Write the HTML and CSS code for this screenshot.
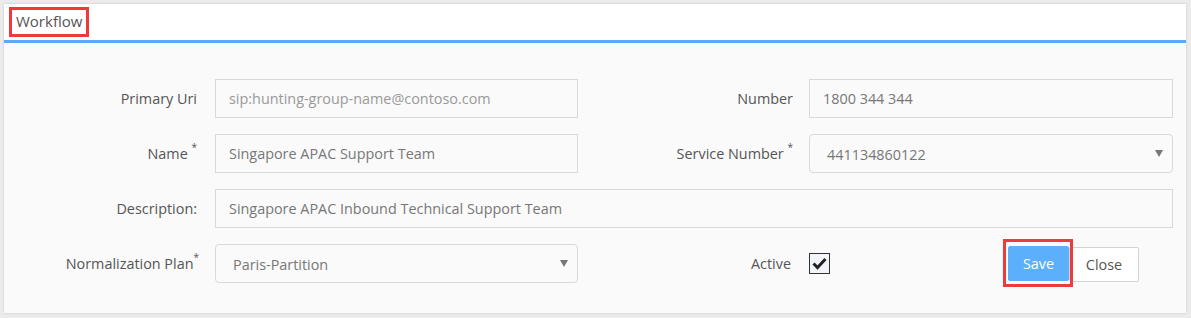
FILE: index.html
```html
<!DOCTYPE html>
<html>
<head>
<meta charset="utf-8">
<link rel="stylesheet" href="styles.css">
</head>
<body>
<div class="panel">
  <div class="panel-head"><span class="title">Workflow</span></div>
  <div class="panel-body">
    <form class="form-grid">
      <label class="lbl"><span>Primary Uri</span></label>
      <div class="ctl"><input class="field" placeholder="sip:hunting-group-name@contoso.com"></div>
      <label class="lbl"><span>Number</span></label>
      <div class="ctl"><input class="field" value="1800 344 344"></div>

      <label class="lbl"><span>Name <sup>*</sup></span></label>
      <div class="ctl"><input class="field" value="Singapore APAC Support Team"></div>
      <label class="lbl"><span>Service Number <sup>*</sup></span></label>
      <div class="ctl"><div class="select"><span>441134860122</span><svg class="caret" width="8" height="7" viewBox="0 0 8 7"><path d="M0 0 H8 L4 7 Z" fill="#777"/></svg></div></div>

      <label class="lbl"><span>Description:</span></label>
      <div class="ctl wide"><input class="field" value="Singapore APAC Inbound Technical Support Team"></div>

      <label class="lbl"><span>Normalization Plan<sup>*</sup></span></label>
      <div class="ctl"><div class="select"><span>Paris-Partition</span><svg class="caret" width="8" height="7" viewBox="0 0 8 7"><path d="M0 0 H8 L4 7 Z" fill="#777"/></svg></div></div>
      <label class="lbl"><span>Active</span></label>
      <div class="ctl actions">
        <span class="check">
          <svg width="15" height="13" viewBox="0 0 15 13"><path d="M1.5 6.5 L5.5 10.5 L13.5 2" fill="none" stroke="#222" stroke-width="3"/></svg>
        </span>
        <div class="buttons">
          <span class="mark"><button type="button" class="btn btn-primary">Save</button></span>
          <button type="button" class="btn btn-default">Close</button>
        </div>
      </div>
    </form>
  </div>
</div>
</body>
</html>
```

FILE: styles.css
```css
html, body {
  margin: 0;
  padding: 0;
  background: #ebebeb;
}
body {
  padding: 4px 5px 5px 4px;
  font-family: "Open Sans", "Liberation Sans", sans-serif;
  font-size: 14.4px;
  color: #555;
}
.panel {
  background: #fafafa;
  box-shadow: 0 0 2px rgba(0,0,0,0.18);
  height: 309px;
  box-sizing: border-box;
}
.panel-head {
  background: #fff;
  height: 36px;
  border-bottom: 3px solid #5aabf4;
  display: flex;
  align-items: center;
  padding-left: 5px;
}
.title {
  border: 3px solid #ee3a3a;
  padding: 2px 4px 3px 4px;
  font-size: 15px;
  color: #555;
  line-height: 19px;
}
.panel-body {
  padding: 36px 0 0 13px;
}
.form-grid {
  display: grid;
  grid-template-columns: 198px 363px 231px 364px;
  grid-auto-rows: 39px;
  row-gap: 16px;
  margin: 0;
}
.lbl {
  display: flex;
  align-items: center;
  justify-content: flex-end;
  padding-right: 18px;
  color: #555;
  white-space: nowrap;
}
.lbl:nth-child(4n+3) { padding-right: 16px; }
.lbl sup {
  font-size: 10px;
  line-height: 0;
  position: relative;
  top: -2px;
}
.ctl { display: flex; }
.wide { grid-column: 2 / 5; }
.field {
  width: 100%;
  height: 39px;
  box-sizing: border-box;
  border: 1px solid #d9d9d9;
  border-radius: 0;
  background: #fafafa;
  padding: 0 13px;
  font-family: inherit;
  font-size: 14.4px;
  color: #777;
  outline: none;
}
.field::placeholder { color: #999; }
.select {
  width: 100%;
  height: 39px;
  box-sizing: border-box;
  border: 1px solid #d9d9d9;
  border-radius: 4px;
  display: flex;
  align-items: center;
  justify-content: space-between;
  padding: 2px 9px 0 17px;
  color: #777;
  background: #fafafa;
}
.caret { margin-top: -3px; }
.actions {
  align-items: center;
  justify-content: space-between;
}
.check {
  width: 21px;
  height: 21px;
  box-sizing: border-box;
  border: 1px solid #333;
  background: #f2f5fa;
  display: flex;
  align-items: center;
  justify-content: center;
}
.buttons {
  display: flex;
  align-items: center;
  margin-right: 34px;
  margin-top: -2px;
}
.mark {
  border: 3px solid #ee3a3a;
  padding: 4px 1px 3px 2px;
  display: flex;
  margin-right: -4px;
  position: relative;
  z-index: 1;
}
.btn {
  font-family: inherit;
  font-size: 14.4px;
  height: 35px;
  box-sizing: border-box;
  border-radius: 2px;
  cursor: pointer;
}
.btn-primary {
  width: 61px;
  background: #5cb0fb;
  border: 1px solid #5cb0fb;
  color: #fff;
}
.btn-default {
  width: 70px;
  background: #fff;
  border: 1px solid #d3d3d3;
  color: #555;
  margin-top: 4px;
}
```
